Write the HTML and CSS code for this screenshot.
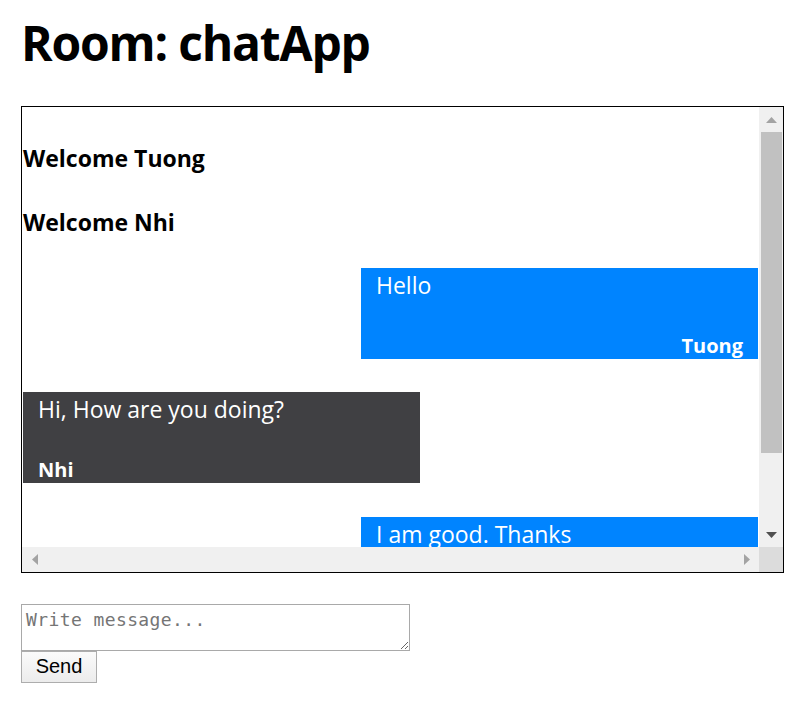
FILE: index.html
```html
<!DOCTYPE html>
<html lang="en">
<head>
<meta charset="utf-8">
<title>Room: chatApp</title>
<link rel="stylesheet" href="styles.css">
</head>
<body>
<div class="page">
  <h1 class="title">Room: chatApp</h1>
  <div class="chat">
    <div class="messages">
      <div class="notice">Welcome Tuong</div>
      <div class="notice">Welcome Nhi</div>
      <div class="bubble mine">
        <div class="text">Hello</div>
        <div class="name">Tuong</div>
      </div>
      <div class="bubble other">
        <div class="text">Hi, How are you doing?</div>
        <div class="name">Nhi</div>
      </div>
      <div class="bubble mine">
        <div class="text">I am good. Thanks</div>
        <div class="name">Tuong</div>
      </div>
    </div>
    <div class="vscroll">
      <div class="sbtn">
        <svg width="11" height="6" viewBox="0 0 11 6"><polygon points="0,6 5.5,0 11,6" fill="#a3a3a3"/></svg>
      </div>
      <div class="vtrack">
        <div class="vthumb"></div>
      </div>
      <div class="sbtn">
        <svg width="11" height="6" viewBox="0 0 11 6"><polygon points="0,0 5.5,6 11,0" fill="#505050"/></svg>
      </div>
    </div>
    <div class="hscroll">
      <div class="sbtn">
        <svg width="6" height="11" viewBox="0 0 6 11"><polygon points="6,0 0,5.5 6,11" fill="#a3a3a3"/></svg>
      </div>
      <div class="htrack"></div>
      <div class="sbtn">
        <svg width="6" height="11" viewBox="0 0 6 11"><polygon points="0,0 6,5.5 0,11" fill="#a3a3a3"/></svg>
      </div>
    </div>
    <div class="corner"></div>
  </div>
  <form class="composer">
    <textarea class="input" placeholder="Write message..."></textarea>
    <button type="button" class="send">Send</button>
  </form>
</div>
</body>
</html>
```
FILE: styles.css
```css
html, body {
  margin: 0;
  background: #fff;
}
body {
  font-family: "Open Sans", "Noto Sans", sans-serif;
  color: #000;
}
.page {
  padding-left: 21px;
}
.title {
  margin: 15px 0 0;
  font-size: 48px;
  line-height: 56px;
  font-weight: 700;
  letter-spacing: -1.2px;
}
.chat {
  margin-top: 35px;
  width: 763px;
  height: 467px;
  box-sizing: border-box;
  border: 1px solid #000;
  display: grid;
  grid-template-columns: 1fr 24px;
  grid-template-rows: 440px 25px;
}
.messages {
  overflow: hidden;
  padding: 0 1px;
  display: flex;
  flex-direction: column;
}
.messages > * {
  flex-shrink: 0;
}
.notice {
  font-size: 23px;
  line-height: 30px;
  font-weight: 700;
  margin-top: 36px;
}
.notice + .notice {
  margin-top: 34px;
}
.bubble {
  width: 397px;
  box-sizing: border-box;
  padding: 1px 15px 0;
  color: #fff;
  margin-top: 33px;
}
.notice + .bubble {
  margin-top: 31px;
}
.other + .mine {
  margin-top: 34px;
}
.mine {
  align-self: flex-end;
  background: #0084ff;
}
.other {
  align-self: flex-start;
  background: #404043;
}
.text {
  font-size: 23px;
  line-height: 32px;
}
.name {
  font-size: 20px;
  line-height: 26px;
  font-weight: 700;
  margin-top: 32px;
}
.mine .name {
  text-align: right;
}
.vscroll {
  background: #f0f0f0;
  display: flex;
  flex-direction: column;
}
.sbtn {
  flex: 0 0 25px;
  display: flex;
  align-items: center;
  justify-content: center;
}
.sbtn svg {
  display: block;
}
.vtrack {
  flex: 1;
  padding: 0 1px 0 2px;
}
.vthumb {
  height: 321px;
  background: #c1c1c1;
}
.hscroll {
  background: #f0f0f0;
  display: flex;
}
.htrack {
  flex: 1;
}
.corner {
  background: #dcdcdc;
}
.composer {
  margin-top: 31px;
}
.input {
  display: block;
  width: 389px;
  height: 47px;
  box-sizing: border-box;
  margin: 0;
  border: 1px solid #a9a9a9;
  padding: 4px 4px;
  font-family: "DejaVu Sans Mono", monospace;
  font-size: 18px;
  line-height: 21px;
  letter-spacing: 0.4px;
}
.input::placeholder {
  color: #757575;
}
.send {
  display: block;
  width: 76px;
  height: 32px;
  box-sizing: border-box;
  margin: 0;
  padding: 0 0 2px;
  border: 1px solid #adadad;
  border-radius: 0;
  background: linear-gradient(#fbfbfb, #ececec);
  font-family: "Liberation Sans", Arial, sans-serif;
  font-size: 20px;
  color: #000;
}
```
